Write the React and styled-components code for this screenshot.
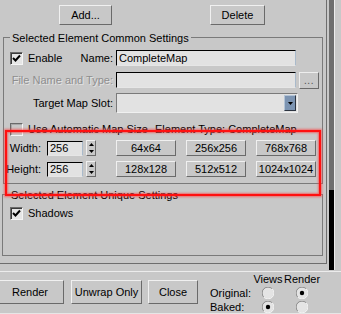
import React from 'react';
import styled, { createGlobalStyle } from 'styled-components';

const GlobalStyle = createGlobalStyle`
  html, body {
    margin: 0;
    padding: 0;
    background: #c8c8c8;
  }
  body {
    font-family: "Liberation Sans", Arial, sans-serif;
    font-size: 11px;
    color: #000;
  }
`;

const Window = styled.div`
  position: relative;
  width: 341px;
  height: 314px;
  overflow: hidden;
  background: #c8c8c8;
`;

const Main = styled.div`
  display: flex;
  height: 271px;
`;

const Rollout = styled.div`
  box-sizing: border-box;
  width: 327px;
  height: 264px;
  padding-top: 5px;
  border-right: 1px solid #6e6e6e;
  border-bottom: 1px solid #6e6e6e;
`;

const ScrollTrack = styled.div`
  margin-left: 2px;
  width: 5px;
  height: 270px;
  background: linear-gradient(#6e6e6e 0 190px, #000 190px);
  border-right: 1px solid #ececec;
`;

const TopBar = styled.div`
  display: flex;
  gap: 98px;
  padding-left: 59px;
  height: 20px;
`;

const Button = styled.button`
  box-sizing: border-box;
  flex: none;
  width: ${p => p.$w}px;
  height: ${p => p.$h || 20}px;
  margin: 0 0 0 ${p => p.$ml || 0}px;
  padding: 0;
  background: #c8c8c8;
  border: 1px solid;
  border-color: #f0f0f0 #6a6a6a #6a6a6a #f0f0f0;
  font: inherit;
  color: #000;
  line-height: 1;
  white-space: nowrap;
`;

const Group = styled.div`
  box-sizing: border-box;
  width: ${p => p.$w}px;
  height: ${p => p.$h}px;
  margin: ${p => p.$mt}px 0 0 ${p => p.$ml}px;
  border: 1px solid #7a7a7a;
`;

const Legend = styled.div`
  width: fit-content;
  margin: -8px 0 0 6px;
  padding: 0 2px;
  height: 14px;
  line-height: 16px;
  background: #c8c8c8;
  white-space: nowrap;
`;

const Row = styled.div`
  display: flex;
  align-items: center;
  height: ${p => p.$h}px;
  margin-top: ${p => p.$mt}px;
  white-space: nowrap;
`;

const LabelCol = styled.div`
  box-sizing: border-box;
  flex: none;
  display: flex;
  align-items: center;
  justify-content: ${p => (p.$split ? 'space-between' : 'flex-end')};
  width: ${p => p.$w}px;
  padding-left: ${p => p.$pl || 0}px;
  padding-right: ${p => p.$pr || 0}px;
  color: ${p => (p.$disabled ? '#8e8e8e' : '#000')};
  text-shadow: ${p => (p.$disabled ? '1px 1px 0 #e4e4e4' : 'none')};
`;

const Field = styled.input`
  box-sizing: border-box;
  flex: none;
  width: ${p => p.$w}px;
  height: ${p => p.$h}px;
  margin: 0 0 0 ${p => p.$ml || 0}px;
  padding: 0 0 0 2px;
  background: #e2e2e2;
  border: 1px solid;
  border-color: #000 #a9bacb #e6e6e6 #000;
  font: inherit;
  color: #000;
  outline: none;
`;

const Browse = styled.div`
  box-sizing: border-box;
  width: 20px;
  height: 17px;
  margin-left: 3px;
  border: 1px solid;
  border-color: #eeeeee #6a6a6a #6a6a6a #eeeeee;
  color: #505050;
  font-size: 10px;
  line-height: 16px;
  text-align: center;
  letter-spacing: 0.5px;
`;

const Select = styled.div`
  box-sizing: border-box;
  display: flex;
  justify-content: flex-end;
  align-items: center;
  width: 182px;
  height: 20px;
  margin-left: 3px;
  padding: 0 1px 0 0;
  background: #e2e2e2;
  border: 1px solid;
  border-color: #7a7a7a #f0f0f0 #f0f0f0 #7a7a7a;
`;

const SelectArrow = styled.div`
  box-sizing: border-box;
  display: flex;
  align-items: center;
  justify-content: center;
  width: 12px;
  height: 16px;
  background: #7c94b2;
  border: 1px solid;
  border-color: #b4c4d6 #2c3440 #2c3440 #b4c4d6;
`;

const CheckBox = styled.div`
  box-sizing: border-box;
  flex: none;
  display: flex;
  align-items: center;
  justify-content: center;
  width: 13px;
  height: 13px;
  margin-left: ${p => p.$ml || 0}px;
  background: ${p => (p.$disabled ? '#c8c8c8' : '#e6e6e6')};
  border: 1px solid;
  border-color: #6a6a6a #f4f4f4 #f4f4f4 #6a6a6a;
  box-shadow: inset 1px 1px 0 ${p => (p.$disabled ? '#a8a8a8' : '#3a3a3a')};
`;

const CheckText = styled.span`
  flex: none;
  width: ${p => (p.$w ? `${p.$w}px` : 'auto')};
  margin-left: 5px;
`;

const Spinner = styled.div`
  box-sizing: border-box;
  flex: none;
  display: flex;
  flex-direction: column;
  align-items: center;
  justify-content: space-around;
  width: 10px;
  height: 16px;
  margin-left: 3px;
  border: 1px solid;
  border-color: #f0f0f0 #6a6a6a #6a6a6a #f0f0f0;
`;

const SizeButtons = styled.div`
  display: flex;
  gap: 10px;
  margin-left: 20px;
`;

const Separator = styled.div`
  height: 0;
  border-top: 1px solid #ececec;
`;

const Footer = styled.div`
  display: flex;
  align-items: flex-start;
  height: 41px;
  border-bottom: 1px solid #e6e6e6;
`;

const FooterButtons = styled.div`
  display: flex;
  padding-top: 8px;
`;

const RadioGrid = styled.div`
  display: grid;
  grid-template-columns: 42px 32px 36px;
  grid-template-rows: 13px 14px 14px;
  align-items: center;
  margin: 1px 0 0 12px;
  line-height: 13px;
  white-space: nowrap;
`;

const Head = styled.div`
  justify-self: center;
`;

const RadioCell = styled.div`
  display: flex;
  justify-content: center;
  align-items: center;
`;

const Highlight = styled.div`
  position: absolute;
  left: 5px;
  top: 130px;
  width: 316px;
  height: 66px;
  box-sizing: border-box;
  border: 2px solid #ff1010;
  box-shadow: 0 0 2px 1px rgba(255, 60, 60, 0.65), inset 0 0 2px 1px rgba(255, 60, 60, 0.65);
  pointer-events: none;
`;

const Check = () => (
  <svg width="9" height="9" viewBox="0 0 9 9">
    <path d="M1 4 L3.5 6.5 L8 1.5" fill="none" stroke="#000" strokeWidth="2" />
  </svg>
);

const Tri = ({ up, w = 5, color = '#000' }) => (
  <svg width={w} height="3" viewBox="0 0 5 3">
    <path d={up ? 'M0 3 L2.5 0 L5 3 Z' : 'M0 0 L5 0 L2.5 3 Z'} fill={color} />
  </svg>
);

const Radio = ({ on }) => (
  <svg width="12" height="12" viewBox="0 0 12 12">
    <circle cx="6" cy="6" r="5.5" fill="#e4e4e4" />
    <path d="M1.8 10.2 A5.5 5.5 0 0 1 10.2 1.8" fill="none" stroke="#8a8a8a" strokeWidth="1" />
    <path d="M10.2 1.8 A5.5 5.5 0 0 1 1.8 10.2" fill="none" stroke="#f6f6f6" strokeWidth="1" />
    {on && <circle cx="6" cy="6" r="2.2" fill="#000" />}
  </svg>
);

const SizeRow = ({ label, sizes, mt }) => (
  <Row $h={16} $mt={mt}>
    <LabelCol $w={38} $pr={1}>{label}</LabelCol>
    <Field $w={36} $h={15} $ml={5} defaultValue="256" readOnly />
    <Spinner>
      <Tri up />
      <Tri />
    </Spinner>
    <SizeButtons>
      {sizes.map(s => (
        <Button key={s} $w={60} $h={16}>{s}</Button>
      ))}
    </SizeButtons>
  </Row>
);

export default function App() {
  return (
    <Window>
      <GlobalStyle />
      <Main>
        <Rollout>
          <TopBar>
            <Button $w={53}>Add...</Button>
            <Button $w={55}>Delete</Button>
          </TopBar>

          <Group $mt={12} $ml={3} $w={320} $h={147}>
            <Legend>Selected Element Common Settings</Legend>
            <Row $h={16} $mt={6}>
              <LabelCol $w={109} $pl={6} $split>
                <span style={{ display: 'flex', alignItems: 'center' }}>
                  <CheckBox><Check /></CheckBox>
                  <CheckText>Enable</CheckText>
                </span>
                <span>Name:</span>
              </LabelCol>
              <Field $w={180} $h={16} $ml={3} defaultValue="CompleteMap" readOnly />
            </Row>
            <Row $h={16} $mt={6}>
              <LabelCol $w={109} $disabled>File Name and Type:</LabelCol>
              <Field $w={180} $h={16} $ml={3} defaultValue="" readOnly />
              <Browse>...</Browse>
            </Row>
            <Row $h={20} $mt={5}>
              <LabelCol $w={109}>Target Map Slot:</LabelCol>
              <Select>
                <SelectArrow><Tri /></SelectArrow>
              </Select>
            </Row>
            <Row $h={14} $mt={9}>
              <CheckBox $ml={6} $disabled />
              <CheckText $w={127}>Use Automatic Map Size</CheckText>
              <span>Element Type: CompleteMap</span>
            </Row>
            <SizeRow label="Width:" sizes={['64x64', '256x256', '768x768']} mt={4} />
            <SizeRow label="Height:" sizes={['128x128', '512x512', '1024x1024']} mt={5} />
          </Group>

          <Group $mt={10} $ml={2} $w={321} $h={62}>
            <Legend>Selected Element Unique Settings</Legend>
            <Row $h={14} $mt={5}>
              <CheckBox $ml={7}><Check /></CheckBox>
              <CheckText>Shadows</CheckText>
            </Row>
          </Group>
        </Rollout>
        <ScrollTrack />
      </Main>
      <Separator />
      <Footer>
        <FooterButtons>
          <Button $w={68} $h={24} $ml={-4}>Render</Button>
          <Button $w={71} $h={24} $ml={7}>Unwrap Only</Button>
          <Button $w={50} $h={24} $ml={6}>Close</Button>
        </FooterButtons>
        <RadioGrid>
          <div />
          <Head>Views</Head>
          <Head>Render</Head>
          <div>Original:</div>
          <RadioCell><Radio /></RadioCell>
          <RadioCell><Radio on /></RadioCell>
          <div>Baked:</div>
          <RadioCell><Radio on /></RadioCell>
          <RadioCell><Radio /></RadioCell>
        </RadioGrid>
      </Footer>
      <Highlight />
    </Window>
  );
}
